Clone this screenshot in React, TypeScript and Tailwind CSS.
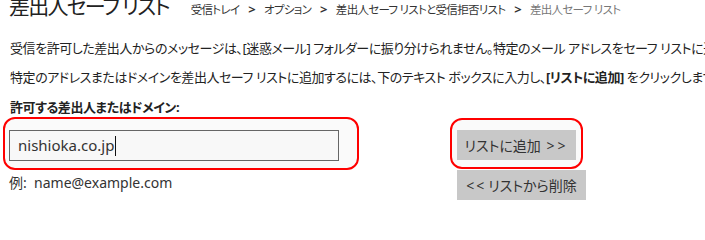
const font = "font-['Noto_Sans','Noto_Sans_CJK_JP',sans-serif]";

export default function App() {
  return (
    <div
      className={`w-[705px] h-[215px] overflow-hidden bg-white text-[#222] ${font} [font-feature-settings:'palt']`}
    >
      {/* header */}
      <div className="flex items-baseline pl-[9px] mt-[-9px] whitespace-nowrap">
        <h1 className="text-[21px] leading-[30px] tracking-[-1.8px] text-[#222]">差出人セーフ リスト</h1>
        <nav className="ml-[22px] text-[11.5px] tracking-[-0.7px] text-[#333] flex items-baseline gap-[9px]">
          <span>受信トレイ</span>
          <span className="font-bold text-[13px]">&gt;</span>
          <span>オプション</span>
          <span className="font-bold text-[13px]">&gt;</span>
          <span>差出人セーフ リストと受信拒否リスト</span>
          <span className="font-bold text-[13px]">&gt;</span>
          <span className="text-[#777]">差出人セーフ リスト</span>
        </nav>
      </div>

      <p className="pl-[10px] mt-[18px] text-[13px] leading-[18px] tracking-[-0.45px] whitespace-nowrap">
        受信を許可した差出人からのメッセージは、[迷惑メール] フォルダーに振り分けられません。特定のメール アドレスをセーフ リストに追加するには、
      </p>
      <p className="pl-[10px] mt-[11px] text-[13px] leading-[18px] tracking-[-0.45px] whitespace-nowrap">
        特定のアドレスまたはドメインを差出人セーフ リストに追加するには、下のテキスト ボックスに入力し、
        <span className="font-bold">[リストに追加]</span> をクリックします。
      </p>
      <label className="block pl-[10px] mt-[12px] text-[13px] leading-[18px] tracking-[-0.45px] font-bold whitespace-nowrap">
        許可する差出人またはドメイン:
      </label>

      <div className="flex items-start mt-[1px]">
        <div className="flex flex-col">
          <div className="ml-[3px] w-[356px] h-[53px] border-2 border-[#ff0000] rounded-[12px] bg-[#fafafa] pl-[4px] pt-[11px]">
            <div className="w-[330px] h-[31px] border border-[#666] bg-[#f8f8f8] flex items-center pl-[8px] text-[15px] text-[#333]">
              <span>nishioka.co.jp</span>
              <span className="inline-block w-px h-[20px] bg-[#111] ml-[1px]" />
            </div>
          </div>
          <div className="pl-[9px] mt-[3px] text-[14px] leading-[20px] text-[#333] whitespace-pre">例:  name@example.com</div>
        </div>

        <div className="flex flex-col ml-[91px] mt-[1px]">
          <div className="w-[133px] h-[51px] border-2 border-[#ff0000] rounded-[12px] bg-[#fafafa] pl-[5px] pt-[10px]">
            <button className="w-[119px] h-[30px] bg-[#c8c8c8] text-[14px] text-[#333] flex items-center justify-center">
              リストに追加&nbsp; <span className="tracking-[3px] ml-[2px]">&gt;&gt;</span>
            </button>
          </div>
          <button className="ml-[7px] mt-[1px] w-[129px] h-[30px] bg-[#c8c8c8] text-[14px] text-[#333] flex items-center justify-center">
            <span className="tracking-[2px] mr-[2px]">&lt;&lt;</span> リストから削除
          </button>
        </div>
      </div>
    </div>
  );
}
